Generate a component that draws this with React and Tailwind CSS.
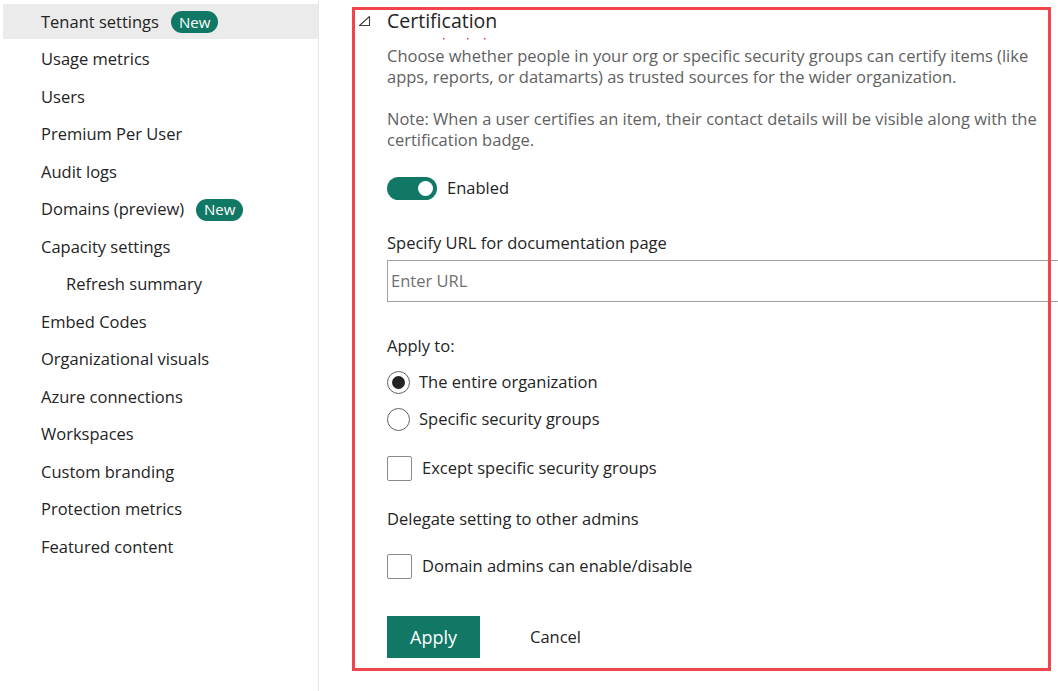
import React, { useState } from "react";

const navItems = [
  { label: "Tenant settings", badge: true, active: true },
  { label: "Usage metrics" },
  { label: "Users" },
  { label: "Premium Per User" },
  { label: "Audit logs" },
  { label: "Domains (preview)", badge: true },
  { label: "Capacity settings" },
  { label: "Refresh summary", sub: true },
  { label: "Embed Codes" },
  { label: "Organizational visuals" },
  { label: "Azure connections" },
  { label: "Workspaces" },
  { label: "Custom branding" },
  { label: "Protection metrics" },
  { label: "Featured content" },
];

function NewBadge() {
  return (
    <span className="ml-[12px] inline-flex h-[22px] items-center rounded-full bg-[#117865] px-[8px] text-[15px] text-white">
      New
    </span>
  );
}

function Radio({ checked, label, onClick }) {
  return (
    <button type="button" onClick={onClick} className="flex h-[37px] items-center text-left">
      <span className="flex h-[23px] w-[23px] items-center justify-center rounded-full border border-[#616161] bg-white">
        {checked ? <span className="h-[13px] w-[13px] rounded-full bg-[#242424]" /> : null}
      </span>
      <span className="ml-[9px] text-[16.5px] text-[#242424]">{label}</span>
    </button>
  );
}

function Checkbox({ checked, label, onClick }) {
  return (
    <button type="button" onClick={onClick} className="flex items-center text-left">
      <span className="flex h-[25px] w-[25px] items-center justify-center rounded-[2px] border border-[#8a8a8a] bg-white">
        {checked ? (
          <svg width="14" height="14" viewBox="0 0 14 14">
            <path d="M2 7l3.5 3.5L12 3" fill="none" stroke="#242424" strokeWidth="1.5" />
          </svg>
        ) : null}
      </span>
      <span className="ml-[10px] text-[16.5px] text-[#242424]">{label}</span>
    </button>
  );
}

export default function App() {
  const [enabled, setEnabled] = useState(true);
  const [scope, setScope] = useState("all");
  const [except, setExcept] = useState(false);
  const [delegate, setDelegate] = useState(false);

  return (
    <div
      className="flex h-[691px] w-[1058px] overflow-hidden bg-white text-[#242424]"
      style={{ fontFamily: "'Open Sans', 'Noto Sans', sans-serif" }}
    >
      {/* left nav */}
      <div className="w-[319px] shrink-0 border-r border-[#e8e8e8] pt-[4px]">
        <div className="flex flex-col gap-[2.5px] pl-[3px]">
          {navItems.map((item) => (
            <div
              key={item.label}
              className={`flex h-[35px] items-center pt-[1px] text-[16.5px] ${item.active ? "bg-[#ebebeb]" : ""} ${item.sub ? "pl-[63px]" : "pl-[38px]"}`}
            >
              <span>{item.label}</span>
              {item.badge ? <NewBadge /> : null}
            </div>
          ))}
        </div>
      </div>

      {/* main */}
      <div className="relative flex-1">
        <div className="pl-[68px] pt-[7px]">
          <div className="relative flex h-[28px] items-center">
            <svg className="absolute left-[-29px] top-[8px]" width="13" height="12" viewBox="0 0 13 12">
              <path d="M11.5 1.5V10.5H1.5Z" fill="none" stroke="#424242" strokeWidth="1.1" strokeLinejoin="round" />
            </svg>
            <span className="text-[19.5px] text-[#242424]">Certification</span>
          </div>
          <svg className="mt-[2px] block" width="120" height="4" viewBox="0 0 120 4">
            <rect x="56" y="1" width="1.5" height="1.5" fill="#e34040" />
            <rect x="80" y="1" width="1.5" height="1.5" fill="#e34040" />
            <rect x="97" y="1" width="1.5" height="1.5" fill="#e34040" />
          </svg>
          <div className="mt-[5px] w-[665px] text-[16.5px] leading-[20.5px] text-[#616161]">
            <p>
              Choose whether people in your org or specific security groups can certify items (like apps, reports, or
              datamarts) as trusted sources for the wider organization.
            </p>
            <p className="mt-[22px]">
              Note: When a user certifies an item, their contact details will be visible along with the certification
              badge.
            </p>
          </div>

          <button type="button" onClick={() => setEnabled(!enabled)} className="mt-[26px] flex items-center">
            <span
              className={`flex h-[23px] w-[50px] items-center rounded-full px-[4px] ${enabled ? "justify-end bg-[#117865]" : "justify-start border border-[#616161] bg-white"}`}
            >
              <span className={`h-[15px] w-[15px] rounded-full ${enabled ? "bg-white" : "bg-[#616161]"}`} />
            </span>
            <span className="ml-[10px] text-[16.5px] text-[#242424]">{enabled ? "Enabled" : "Disabled"}</span>
          </button>

          <div className="mt-[30px] text-[16.5px]">Specify URL for documentation page</div>
          <input
            placeholder="Enter URL"
            className="mt-[4px] h-[42px] w-[720px] border border-[#a0a0a0] px-[3px] text-[16.5px] text-[#242424] outline-none placeholder:text-[#707070]"
          />

          <div className="mt-[32px] text-[16.5px]">Apply to:</div>
          <div className="mt-[6px] flex flex-col">
            <Radio checked={scope === "all"} label="The entire organization" onClick={() => setScope("all")} />
            <Radio checked={scope === "groups"} label="Specific security groups" onClick={() => setScope("groups")} />
          </div>
          <div className="mt-[18px]">
            <Checkbox checked={except} label="Except specific security groups" onClick={() => setExcept(!except)} />
          </div>

          <div className="mt-[26px] text-[16.5px]">Delegate setting to other admins</div>
          <div className="mt-[22px]">
            <Checkbox checked={delegate} label="Domain admins can enable/disable" onClick={() => setDelegate(!delegate)} />
          </div>

          <div className="mt-[37px] flex items-center">
            <button type="button" className="h-[42px] w-[93px] bg-[#117865] text-[18px] text-white">
              Apply
            </button>
            <button type="button" className="ml-[50px] text-[16.5px] text-[#242424]">
              Cancel
            </button>
          </div>
        </div>

        {/* highlight frame */}
        <div className="pointer-events-none absolute left-[33px] top-[7px] h-[664px] w-[699px] border-[3px] border-[#f2444b]" />
      </div>
    </div>
  );
}
